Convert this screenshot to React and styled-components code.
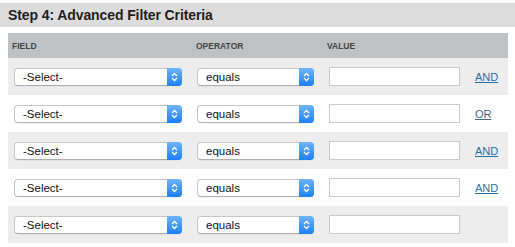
import React from "react";
import styled, { createGlobalStyle } from "styled-components";

const GlobalStyle = createGlobalStyle`
  body {
    margin: 0;
    background: #ffffff;
    font-family: "Liberation Sans", Arial, Helvetica, sans-serif;
  }
`;

const rows = [
  { link: "AND", visited: false },
  { link: "OR", visited: true },
  { link: "AND", visited: false },
  { link: "AND", visited: false },
  { link: null },
];

function Chevrons() {
  return (
    <svg width="7" height="10" viewBox="0 0 7 10">
      <path d="M1 4 L3.5 1.5 L6 4" fill="none" stroke="#fff" strokeWidth="1.3" />
      <path d="M1 6 L3.5 8.5 L6 6" fill="none" stroke="#fff" strokeWidth="1.3" />
    </svg>
  );
}

function FakeSelect({ value, width }) {
  return (
    <SelectBox $width={width}>
      <span className="label">{value}</span>
      <span className="arrow">
        <Chevrons />
      </span>
    </SelectBox>
  );
}

function App() {
  return (
    <Page>
      <GlobalStyle />
      <TitleBar>Step 4: Advanced Filter Criteria</TitleBar>
      <Table>
        <HeadRow>
          <span>Field</span>
          <span>Operator</span>
          <span>Value</span>
        </HeadRow>
        {rows.map((r, i) => (
          <Row key={i} $shaded={i % 2 === 0}>
            <FakeSelect value="-Select-" width={168} />
            <FakeSelect value="equals" width={117} />
            <ValueInput type="text" />
            {r.link ? <Link href="#" $visited={r.visited}>{r.link}</Link> : <span />}
          </Row>
        ))}
      </Table>
    </Page>
  );
}

export default App;

const Page = styled.div`
  width: 515px;
  padding-top: 3px;
`;

const TitleBar = styled.div`
  height: 24px;
  background: #dcdcdc;
  display: flex;
  align-items: center;
  padding-left: 8px;
  font-size: 14px;
  font-weight: bold;
  color: #1e1e1e;
  letter-spacing: -0.1px;
`;

const Table = styled.div`
  margin: 6px 7px 0 8px;
`;

const HeadRow = styled.div`
  height: 25px;
  background: #bec2c5;
  display: grid;
  grid-template-columns: 184px 131px 1fr;
  align-items: center;
  padding-left: 4px;
  span {
    font-size: 8.5px;
    font-weight: bold;
    text-transform: uppercase;
    color: #454545;
  }
`;

const Row = styled.div`
  height: 37px;
  background: ${(p) => (p.$shaded ? "#ededed" : "#ffffff")};
  display: grid;
  grid-template-columns: 183px 132px 146px 1fr;
  align-items: center;
  padding-left: 6px;
`;

const SelectBox = styled.div`
  width: ${(p) => p.$width}px;
  height: 18px;
  box-sizing: border-box;
  display: flex;
  background: #fff;
  border: 1px solid #c6c6c6;
  border-bottom-color: #aeaeae;
  border-radius: 4px;
  box-shadow: 0 0.5px 0.5px rgba(0, 0, 0, 0.08);
  .label {
    flex: 1;
    padding-left: 8px;
    font-size: 11.5px;
    line-height: 16px;
    color: #111;
  }
  .arrow {
    width: 15px;
    margin: -1px -1px -1px 0;
    border-radius: 0 4px 4px 0;
    background: linear-gradient(#6fb4fb, #1c80fb);
    display: flex;
    align-items: center;
    justify-content: center;
  }
`;

const ValueInput = styled.input`
  width: 131px;
  height: 19px;
  box-sizing: border-box;
  margin: 0;
  border: 1px solid #c9c9c9;
  background: #fff;
  outline: none;
`;

const Link = styled.a`
  font-size: 11px;
  color: ${(p) => (p.$visited ? "#4a6580" : "#2c6fa6")};
  text-decoration: underline;
  padding-left: 0;
`;
